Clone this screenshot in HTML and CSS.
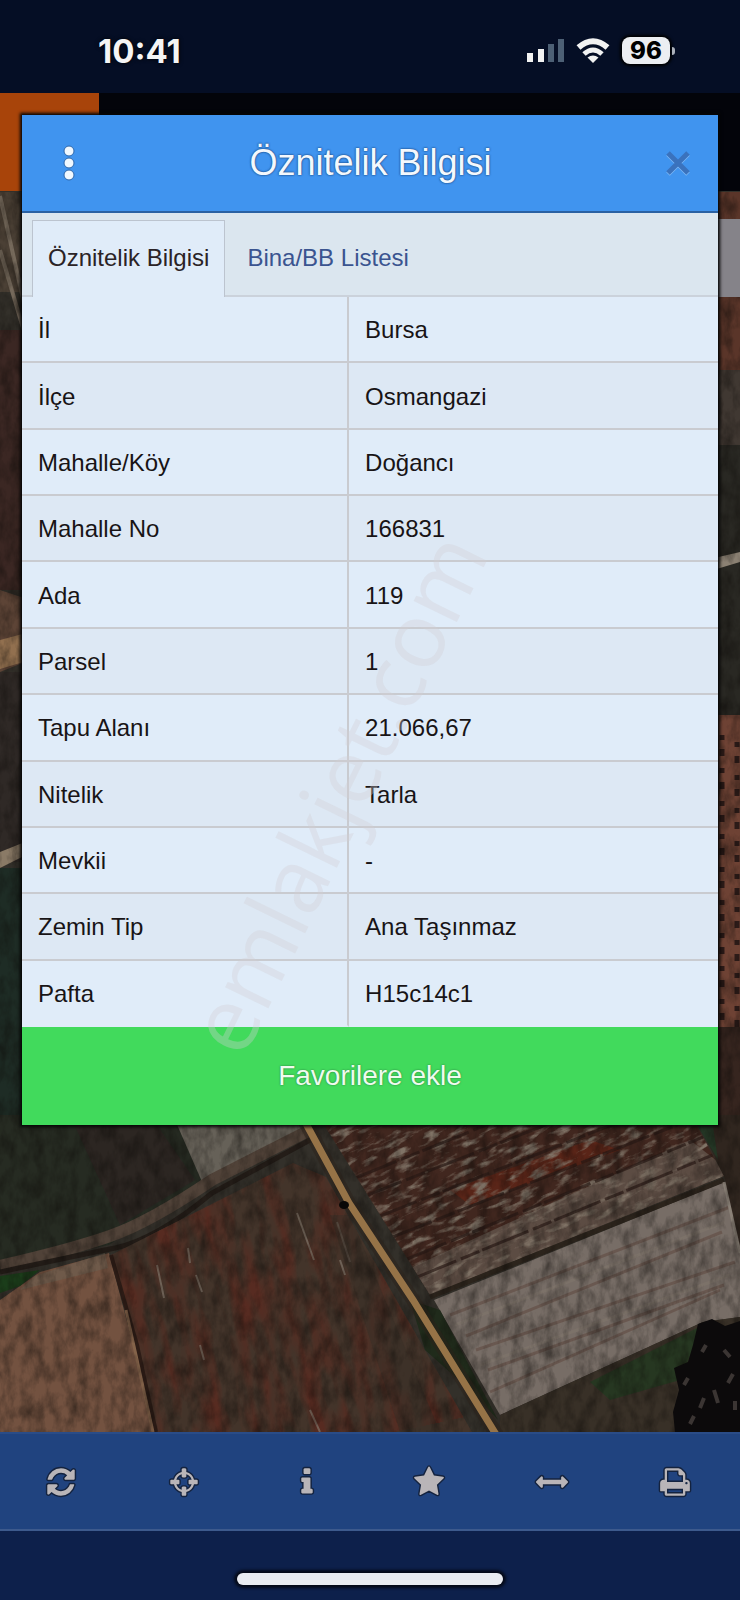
FILE: index.html
```html
<!DOCTYPE html>
<html lang="tr">
<head>
  <meta charset="UTF-8" />
  <meta name="viewport" content="width=device-width, initial-scale=1.0"/>
  <title>Öznitelik Bilgisi</title>
  <link rel="stylesheet" href="styles.css">
</head>
<body>
  <div class="status-bar">
    <span class="clock">10:41</span>
    <div class="status-icons">
      <svg class="signal" viewBox="0 0 38 26">
        <rect x="1" y="15" width="6" height="9" fill="#f2f2f2"/>
        <rect x="12" y="11" width="6" height="13" fill="#f2f2f2"/>
        <rect x="22" y="6" width="6" height="18" fill="#4d6075"/>
        <rect x="32" y="1" width="6" height="23" fill="#4d6075"/>
      </svg>
      <svg class="wifi" viewBox="0 0 34 26">
        <path d="M2.500 9.500Q17 -3 31.500 9.500" stroke-width="6"/>
        <path d="M8 16Q17 8 26 16" stroke-width="5"/>
        <path d="M17 25L11.500 19.500Q17 15.500 22.500 19.500Z" class="wifi-dot"/>
      </svg>
      <span class="battery">96</span>
    </div>
  </div>

  <main class="map-area">
    <svg class="map" viewBox="0 93 740 1339" preserveAspectRatio="xMidYMax slice">
      <defs>
        <filter id="grain" x="0" y="0" width="100%" height="100%" color-interpolation-filters="sRGB">
          <feTurbulence type="fractalNoise" baseFrequency="0.090 0.050" numOctaves="4" seed="4"/>
          <feColorMatrix values="0 0 0 0 0.050  0 0 0 0 0.040  0 0 0 0 0.030  1.800 0 0 0 -0.650"/>
        </filter>
        <filter id="streaks" x="0" y="0" width="100%" height="100%" color-interpolation-filters="sRGB">
          <feTurbulence type="fractalNoise" baseFrequency="0.050 0.160" numOctaves="4" seed="9"/>
          <feColorMatrix values="0 0 0 0 0.500  0 0 0 0 0.450  0 0 0 0 0.400  4 0 0 0 -2"/>
        </filter>
        <filter id="redNoise" x="0" y="0" width="100%" height="100%" color-interpolation-filters="sRGB">
          <feTurbulence type="fractalNoise" baseFrequency="0.050 0.012" numOctaves="3" seed="2"/>
          <feColorMatrix values="0 0 0 0 0.340  0 0 0 0 0.170  0 0 0 0 0.130  3 0 0 0 -1.200"/>
        </filter>
        <clipPath id="plowed"><path d="M321 1120H694L724 1176L430 1295Z"/></clipPath>
        <clipPath id="redField"><path d="M111 1255L293 1163L326 1177L425 1350L472 1432H156Z"/></clipPath>
      </defs>

      <rect y="93" width="740" height="1339" fill="#33302a"/>

      <!-- left edge -->
      <rect y="192" width="30" height="100" fill="#4b4035"/>
      <path d="M0 196L30 330M0 250L28 345" stroke="#75695b" stroke-width="4"/>
      <path d="M0 330H30V590H0Z" fill="#3b2723"/>
      <path d="M0 590L30 600V660L0 672Z" fill="#5d4436"/>
      <path d="M0 640L30 632V660L0 669Z" fill="#92704f"/>
      <rect y="672" width="30" height="190" fill="#2f2926"/>
      <path d="M0 852L30 840V853L0 868Z" fill="#8a7a66"/>
      <rect y="868" width="30" height="280" fill="#1e2c25"/>

      <!-- right edge -->
      <rect x="710" y="192" width="30" height="180" fill="#5a3529"/>
      <rect x="710" y="370" width="30" height="75" fill="#403832"/>
      <rect x="710" y="445" width="30" height="270" fill="#292823"/>
      <path d="M710 559L740 552V562L710 571Z" fill="#8b8173"/>
      <rect x="710" y="715" width="30" height="312" fill="#6e4234"/>
      <path d="M722 735V1027M737 742V1027" stroke="#2c1b18" stroke-width="5" stroke-dasharray="5 9 7 12"/>
      <rect x="710" y="1027" width="30" height="110" fill="#36251f"/>

      <!-- fields under the dialog -->
      <path d="M0 1115H175L203 1183L109 1245L0 1266Z" fill="#262b22"/>
      <path d="M70 1115H150L195 1180L120 1225Z" fill="#2c2622"/>
      <path d="M175 1120H304L302 1137L203 1184Z" fill="#666158"/>
      <path d="M0 1266Q70 1250 110 1236T212 1180L310 1130" fill="none" stroke="#504238" stroke-width="12"/>
      <path d="M0 1272Q75 1256 115 1248T212 1193L310 1140" fill="none" stroke="#241d18" stroke-width="5"/>
      <path d="M0 1300L40 1272L109 1253L156 1432H0Z" fill="#735240"/>
      <path d="M0 1276L40 1270L20 1286L0 1293Z" fill="#1b3d1a"/>
      <path d="M35 1276L105 1253L108 1268L20 1290Z" fill="#6d6052" opacity="0.600"/>
      <path d="M111 1255L293 1163L326 1177L425 1350L472 1432H156Z" fill="#43342a"/>
      <g clip-path="url(#redField)">
        <rect x="80" y="1120" width="420" height="330" filter="url(#redNoise)" transform="rotate(-12 290 1280)"/>
        <path d="M297 1213L314 1260M337 1222L350 1262M340 1260L345 1275M188 1248L190 1263M157 1265L164 1298M196 1275L202 1292M200 1345L204 1360M310 1410L320 1432" stroke="#81766a" stroke-width="2" opacity="0.700"/>
        <path d="M350 1215L440 1432H400L330 1215Z" fill="#382e25" opacity="0.500"/>
      </g>
      <path d="M111 1255L137 1345L156 1432" fill="none" stroke="#2d1c16" stroke-width="4"/>
      <path d="M126 1310L153 1432" fill="none" stroke="#84634a" stroke-width="3"/>

      <path d="M321 1120H694L724 1176L430 1295Z" fill="#41271f"/>
      <g clip-path="url(#plowed)">
        <path d="M450 1190L590 1140L620 1150L470 1205Z" fill="#5a2518"/>
        <path d="M395 1275L690 1140L722 1165V1185L430 1297Z" fill="#6e665b" opacity="0.600"/>
        <rect x="240" y="1030" width="560" height="340" filter="url(#streaks)" transform="rotate(-24 520 1200)"/>
        <path d="M350 1180L610 1075M355 1200L680 1072M370 1220L700 1090M385 1240L710 1112M400 1262L720 1130M410 1280L720 1152" stroke="#2a1b16" stroke-width="3" stroke-dasharray="50 5 20 3" opacity="0.700"/>
      </g>
      <path d="M694 1115H740V1253L724 1176Z" fill="#30261f"/>
      <path d="M694 1120H712L718 1160Z" fill="#233524"/>
      <path d="M434 1300L724 1182L740 1253V1317L703 1322L500 1415Z" fill="#776d66"/>
      <path d="M450 1315L730 1207M466 1336L722 1232M476 1350L735 1262M488 1370L724 1285M490 1392L720 1290" stroke="#5d453b" stroke-width="3" opacity="0.500"/>
      <path d="M455 1325L725 1222M480 1365L730 1275" stroke="#82776d" stroke-width="3" opacity="0.500"/>
      <path d="M430 1297L724 1180" stroke="#2c241c" stroke-width="5"/>
      <path d="M724 1182L740 1253" stroke="#8a8177" stroke-width="3"/>
      <path d="M500 1415L703 1322L740 1317V1432H500Z" fill="#383027"/>
      <path d="M590 1382L703 1325L680 1380L610 1400Z" fill="#203a20" opacity="0.700"/>
      <path d="M440 1310L498 1420L470 1390L425 1350L410 1300Z" fill="#202b1b"/>

      <rect y="192" width="740" height="1240" filter="url(#grain)" opacity="0.500"/>

      <path d="M304 1120L349 1203L413 1300L500 1440" fill="none" stroke="#2b211a" stroke-width="14" opacity="0.500"/>
      <path d="M304 1120L349 1203L413 1300L497 1436" fill="none" stroke="#967347" stroke-width="7"/>
      <ellipse cx="344" cy="1205" rx="5" ry="4" fill="#090807"/>
      <path d="M698 1324L712 1319L725 1326L740 1321V1432H675L673 1412L679 1390L674 1368L688 1362L693 1345Z" fill="#0c0a0b"/>
      <path d="M702 1352L706 1345M724 1350L730 1357M684 1385L688 1378M714 1390L718 1403M700 1408L704 1398M728 1383L733 1374M690 1424L694 1416M735 1410V1401" stroke="#3b3533" stroke-width="4"/>
    </svg>

    <div class="app-header"><span class="app-logo"></span></div>
    <div class="map-button"></div>

    <section class="dialog">
      <header class="dialog-header">
        <button class="menu-btn" aria-label="Menü">
          <svg viewBox="0 0 12 36"><circle cx="6" cy="6" r="5"/><circle cx="6" cy="18" r="5"/><circle cx="6" cy="30" r="5"/></svg>
        </button>
        <h1>Öznitelik Bilgisi</h1>
        <button class="close-btn" aria-label="Kapat">
          <svg viewBox="0 0 24 24"><path d="M2 2L22 22M22 2L2 22"/></svg>
        </button>
      </header>

      <nav class="tabs">
        <a class="tab active" href="#">Öznitelik Bilgisi</a>
        <a class="tab" href="#">Bina/BB Listesi</a>
      </nav>

      <table class="info-table">
        <tr><th scope="row">İl</th><td>Bursa</td></tr>
        <tr><th scope="row">İlçe</th><td>Osmangazi</td></tr>
        <tr><th scope="row">Mahalle/Köy</th><td>Doğancı</td></tr>
        <tr><th scope="row">Mahalle No</th><td>166831</td></tr>
        <tr><th scope="row">Ada</th><td>119</td></tr>
        <tr><th scope="row">Parsel</th><td>1</td></tr>
        <tr><th scope="row">Tapu Alanı</th><td>21.066,67</td></tr>
        <tr><th scope="row">Nitelik</th><td>Tarla</td></tr>
        <tr><th scope="row">Mevkii</th><td>-</td></tr>
        <tr><th scope="row">Zemin Tip</th><td>Ana Taşınmaz</td></tr>
        <tr><th scope="row">Pafta</th><td>H15c14c1</td></tr>
      </table>

      <button class="favorite-btn">Favorilere ekle</button>
      <span class="watermark">emlakjet.com</span>
    </section>
  </main>

  <nav class="toolbar">
    <button aria-label="Yenile"><svg viewBox="0 0 1792 1792"><path d="M1639 1056q0 5-1 7-64 268-268 434.500t-478 166.500q-146 0-282.500-55t-243.500-157l-129 129q-19 19-45 19t-45-19-19-45v-448q0-26 19-45t45-19h448q26 0 45 19t19 45-19 45l-137 137q71 66 161 102t187 36q134 0 250-65t186-179q11-17 53-117 8-23 30-23h192q13 0 22.500 9.500t9.500 22.500zm25-800v448q0 26-19 45t-45 19h-448q-26 0-45-19t-19-45 19-45l138-138q-148-137-349-137-134 0-250 65t-186 179q-11 17-53 117-8 23-30 23h-199q-13 0-22.500-9.500t-9.500-22.500v-7q65-268 270-434.500t480-166.500q146 0 284 55.500t245 156.500l130-129q19-19 45-19t45 19 19 45z"/></svg></button>
    <button aria-label="Konum"><svg viewBox="0 0 1792 1792"><path d="M1325 1024h-109q-26 0-45-19t-19-45v-128q0-26 19-45t45-19h109q-32-108-112.500-188.500t-188.500-112.500v109q0 26-19 45t-45 19h-128q-26 0-45-19t-19-45v-109q-108 32-188.500 112.500t-112.500 188.500h109q26 0 45 19t19 45v128q0 26-19 45t-45 19h-109q32 108 112.500 188.500t188.500 112.500v-109q0-26 19-45t45-19h128q26 0 45 19t19 45v109q108-32 188.500-112.500t112.500-188.500zm339-192v128q0 26-19 45t-45 19h-143q-37 161-154.500 278.500t-278.500 154.500v143q0 26-19 45t-45 19h-128q-26 0-45-19t-19-45v-143q-161-37-278.500-154.500t-154.500-278.500h-143q-26 0-45-19t-19-45v-128q0-26 19-45t45-19h143q37-161 154.500-278.500t278.500-154.500v-143q0-26 19-45t45-19h128q26 0 45 19t19 45v143q161 37 278.500 154.500t154.500 278.500h143q26 0 45 19t19 45z"/></svg></button>
    <button aria-label="Bilgi"><svg viewBox="0 0 1792 1792"><path d="M1216 1344v128q0 26-19 45t-45 19h-512q-26 0-45-19t-19-45v-128q0-26 19-45t45-19h64v-384h-64q-26 0-45-19t-19-45v-128q0-26 19-45t45-19h384q26 0 45 19t19 45v576h64q26 0 45 19t19 45zm-128-1152v192q0 26-19 45t-45 19h-256q-26 0-45-19t-19-45v-192q0-26 19-45t45-19h256q26 0 45 19t19 45z"/></svg></button>
    <button aria-label="Favoriler"><svg viewBox="0 0 1792 1792"><path d="M1728 647q0 22-26 48l-363 354 86 500q1 7 1 20 0 21-10.500 35.500t-30.500 14.500q-19 0-40-12l-449-236-449 236q-22 12-40 12-21 0-31.500-14.500t-10.500-35.500q0-6 2-20l86-500-364-354q-25-27-25-48 0-37 56-46l502-73 225-455q19-41 49-41t49 41l225 455 502 73q56 9 56 46z"/></svg></button>
    <button aria-label="Ölçüm"><svg viewBox="0 0 1792 1792"><path d="M1792 896q0 26-19 45l-256 256q-19 19-45 19t-45-19-19-45v-128h-1024v128q0 26-19 45t-45 19-45-19l-256-256q-19-19-19-45t19-45l256-256q19-19 45-19t45 19 19 45v128h1024v-128q0-26 19-45t45-19 45 19l256 256q19 19 19 45z"/></svg></button>
    <button aria-label="Yazdır"><svg viewBox="0 0 1792 1792"><path d="M448 1536h896v-256h-896v256zm0-640h896v-384h-160q-40 0-68-28t-28-68v-160h-640v640zm1152 64q0-26-19-45t-45-19-45 19-19 45 19 45 45 19 45-19 19-45zm128 0v416q0 13-9.500 22.500t-22.500 9.500h-224v160q0 40-28 68t-68 28h-960q-40 0-68-28t-28-68v-160h-224q-13 0-22.500-9.500t-9.500-22.500v-416q0-79 56.500-135.500t135.500-56.500h64v-544q0-40 28-68t68-28h672q40 0 88 20t76 48l152 152q28 28 48 76t20 88v256h64q79 0 135.500 56.500t56.500 135.500z"/></svg></button>
  </nav>

  <div class="home-bar"><span class="home-indicator"></span></div>
</body>
</html>
```

FILE: styles.css
```css
* {
  box-sizing: border-box;
}

body {
  margin: 0;
  min-height: 100vh;
  display: flex;
  flex-direction: column;
  font-family: "Liberation Sans", Arial, sans-serif;
  font-size: 24px;
  background-color: #0d204b;
}

button {
  border: none;
  padding: 0;
  background: none;
  font-family: inherit;
  cursor: pointer;
}

/* status bar */
.status-bar {
  display: flex;
  align-items: center;
  justify-content: space-between;
  height: 93px;
  padding: 8px 65px 0 98px;
  background-color: #050e25;
  color: #f5f5f5;
}

.clock {
  font-family: Inter, sans-serif;
  font-size: 33px;
  font-weight: 700;
  text-shadow: 0 0 4px #000;
}

.status-icons {
  display: flex;
  align-items: center;
  gap: 12px;
}

.signal {
  width: 38px;
  height: 26px;
}

.wifi {
  width: 34px;
  height: 26px;
  fill: none;
  stroke: #f2f2f2;
}

.wifi-dot {
  fill: #f2f2f2;
  stroke: none;
}

.battery {
  position: relative;
  width: 48px;
  height: 27px;
  margin-right: 5px;
  border-radius: 8px;
  background-color: #eceef2;
  box-shadow: 0 0 3px 2px #000;
  color: #000;
  font-family: Inter, sans-serif;
  font-size: 24px;
  font-weight: 800;
  line-height: 27px;
  text-align: center;
}

.battery::after {
  content: "";
  position: absolute;
  right: -5px;
  top: 10px;
  width: 3px;
  height: 8px;
  border-radius: 0 3px 3px 0;
  background-color: #aab0ba;
}

/* map */
.map-area {
  position: relative;
  flex: 1;
  padding: 22px;
  overflow: hidden;
}

.map {
  position: absolute;
  left: 0;
  top: 0;
  width: 100%;
  height: 100%;
}

.app-header {
  position: absolute;
  left: 0;
  right: 0;
  top: 0;
  height: 98px;
  background-color: #03040a;
}

.app-logo {
  display: block;
  width: 99px;
  height: 98px;
  background-color: #a8440a;
}

.map-button {
  position: absolute;
  right: 0;
  top: 126px;
  width: 40px;
  height: 78px;
  background-color: #858389;
}

/* dialog */
.dialog {
  position: relative;
  background-color: #e0ecf9;
  box-shadow: 0 0 3px 2px #050505;
}

.dialog-header {
  display: flex;
  align-items: center;
  justify-content: space-between;
  height: 98px;
  padding: 0 28px 0 41px;
  background-color: #4094ef;
  border-bottom: 2px solid #2a61a3;
}

.dialog-header h1 {
  margin: 0;
  color: #f3f8fd;
  font-size: 36px;
  font-weight: 400;
  text-shadow: 0 0 2px #1d4f8c, 0 0 2px #1d4f8c;
}

.menu-btn svg {
  display: block;
  width: 12px;
  height: 36px;
  fill: #f0f8ff;
  stroke: #2d67ab;
  stroke-width: 1;
}

.close-btn svg {
  display: block;
  width: 24px;
  height: 24px;
  fill: none;
  stroke: #3a72bd;
  stroke-width: 5;
  filter: drop-shadow(0 1px 0 #7db8f5);
}

.tabs {
  display: flex;
  align-items: flex-end;
  gap: 6px;
  height: 84px;
  padding: 7px 10px 0;
  background-color: #dbe6ef;
  border-bottom: 2px solid #cbd2db;
}

.tab {
  height: 77px;
  margin-bottom: -2px;
  padding: 0 15px;
  border: 1px solid transparent;
  color: #3a5490;
  line-height: 74px;
  text-decoration: none;
}

.tab.active {
  border-color: #bcc4cf;
  border-bottom: none;
  background-color: #e0ecf9;
  color: #2b2326;
}

.info-table {
  width: 100%;
  height: 730px;
  border-spacing: 0;
  table-layout: fixed;
}

.info-table th,
.info-table td {
  padding: 2px 16px 0;
  border-bottom: 2px solid #c9cbd0;
  color: #181416;
  font-weight: 400;
  text-align: left;
}

.info-table th {
  width: 47%;
  border-right: 2px solid #c9cbd0;
}

.info-table tr:nth-child(even) {
  background-color: #dde8f4;
}

.info-table tr:last-child > * {
  border-bottom-color: transparent;
}

.favorite-btn {
  display: block;
  width: 100%;
  height: 98px;
  background-color: #41da5c;
  color: #effbee;
  font-size: 28px;
  text-shadow: 0 0 2px #23733a;
}

.watermark {
  position: absolute;
  left: 45%;
  top: 67%;
  transform: translate(-50%, -50%) rotate(-64deg);
  color: rgba(208, 206, 212, 0.35);
  font-family: "Open Sans", sans-serif;
  font-size: 90px;
  line-height: 1;
  pointer-events: none;
}

/* bottom toolbar */
.toolbar {
  display: grid;
  grid-template-columns: repeat(6, 1fr);
  height: 99px;
  padding-right: 4px;
  background-color: #20437f;
  border-top: 2px solid #2a4c87;
  border-bottom: 2px solid #3d5a8d;
}

.toolbar button {
  display: flex;
  align-items: center;
  justify-content: center;
}

.toolbar svg {
  width: 32px;
  height: 32px;
  fill: #b9b5b8;
  stroke: #14233f;
  stroke-width: 160;
  paint-order: stroke;
  overflow: visible;
}

.home-bar {
  display: flex;
  align-items: flex-end;
  justify-content: center;
  height: 69px;
  padding-bottom: 15px;
}

.home-indicator {
  width: 36%;
  height: 12px;
  border-radius: 6px;
  background-color: #e9ecf1;
  box-shadow: 0 0 3px 3px #050a18;
}
```
